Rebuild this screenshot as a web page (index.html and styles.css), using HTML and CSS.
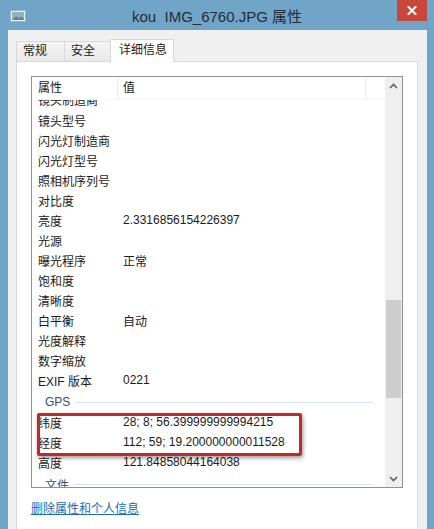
FILE: index.html
```html
<!DOCTYPE html>
<html lang="zh-CN">
<head>
<meta charset="utf-8">
<title>kou IMG_6760.JPG 属性</title>
<link rel="stylesheet" href="styles.css">
</head>
<body>
<div class="window">
  <div class="titlebar">
    <svg class="app-icon" width="16" height="12" viewBox="0 0 16 12">
      <rect x="0.5" y="0.5" width="15" height="11" fill="#e9f2f6" stroke="#9fb4bf"/>
      <rect x="2" y="2" width="12" height="8" fill="#8fb3c3"/>
      <path d="M2 10 L6 6 L9 8 L11 6.5 L14 9 L14 10 Z" fill="#5e8796"/>
    </svg>
    <div class="title">kou  IMG_6760.JPG 属性</div>
    <div class="close">
      <svg width="10" height="9" viewBox="0 0 10 9"><path d="M1.5 1 L8.5 8 M8.5 1 L1.5 8" stroke="#fff" stroke-width="2" stroke-linecap="square"/></svg>
    </div>
  </div>
  <div class="client">
    <div class="tabs">
      <div class="tab t1">常规</div>
      <div class="tab t2">安全</div>
      <div class="tab t3 active">详细信息</div>
    </div>
    <div class="panel">
      <div class="list">
        <div class="list-main">
          <div class="list-head">
            <div class="hc hk">属性</div>
            <div class="hc hv">值</div>
            <div class="hc hx"></div>
          </div>
          <div class="rows">
            <div class="row first"><span class="k">镜头制造商</span><span class="v"></span></div>
            <div class="row"><span class="k">镜头型号</span><span class="v"></span></div>
            <div class="row"><span class="k">闪光灯制造商</span><span class="v"></span></div>
            <div class="row"><span class="k">闪光灯型号</span><span class="v"></span></div>
            <div class="row"><span class="k">照相机序列号</span><span class="v"></span></div>
            <div class="row"><span class="k">对比度</span><span class="v"></span></div>
            <div class="row"><span class="k">亮度</span><span class="v">2.3316856154226397</span></div>
            <div class="row"><span class="k">光源</span><span class="v"></span></div>
            <div class="row"><span class="k">曝光程序</span><span class="v">正常</span></div>
            <div class="row"><span class="k">饱和度</span><span class="v"></span></div>
            <div class="row"><span class="k">清晰度</span><span class="v"></span></div>
            <div class="row"><span class="k">白平衡</span><span class="v">自动</span></div>
            <div class="row"><span class="k">光度解释</span><span class="v"></span></div>
            <div class="row"><span class="k">数字缩放</span><span class="v"></span></div>
            <div class="row"><span class="k">EXIF 版本</span><span class="v">0221</span></div>
            <div class="group"><span class="gt">GPS</span><span class="gl"></span></div>
            <div class="row"><span class="k">纬度</span><span class="v">28; 8; 56.399999999994215</span></div>
            <div class="row"><span class="k">经度</span><span class="v">112; 59; 19.200000000011528</span></div>
            <div class="row"><span class="k">高度</span><span class="v">121.84858044164038</span></div>
            <div class="group"><span class="gt">文件</span><span class="gl"></span></div>
          </div>
        </div>
        <div class="scrollbar">
          <div class="sb-arrow">
            <svg width="9" height="6" viewBox="0 0 9 6"><path d="M1 5 L4.5 1.5 L8 5" fill="none" stroke="#606060" stroke-width="1.6"/></svg>
          </div>
          <div class="sb-track">
            <div class="sb-space top"></div>
            <div class="sb-thumb"></div>
            <div class="sb-space"></div>
          </div>
          <div class="sb-arrow">
            <svg width="9" height="6" viewBox="0 0 9 6"><path d="M1 1 L4.5 4.5 L8 1" fill="none" stroke="#606060" stroke-width="1.6"/></svg>
          </div>
        </div>
      </div>
      <a class="remove-link" href="#">删除属性和个人信息</a>
    </div>
  </div>
  <div class="highlight"></div>
</div>
</body>
</html>
```
FILE: styles.css
```css
html, body {
  margin: 0;
  padding: 0;
}
body {
  width: 434px;
  height: 529px;
  overflow: hidden;
  font-family: "Liberation Sans", "Noto Sans CJK SC", sans-serif;
  font-size: 12px;
  color: #1a1a1a;
}
.window {
  position: relative;
  width: 434px;
  height: 529px;
  background: #70a5c8;
  display: flex;
  flex-direction: column;
  overflow: hidden;
}
.titlebar {
  height: 30px;
  flex: none;
  position: relative;
  display: flex;
  align-items: center;
  justify-content: center;
}
.app-icon {
  position: absolute;
  left: 10px;
  top: 10px;
}
.title {
  white-space: pre;
  font-family: "Liberation Sans", "Noto Sans CJK SC", sans-serif;
  font-size: 15px;
  color: #1f2d38;
  padding-top: 1px;
}
.close {
  position: absolute;
  right: 7px;
  top: 0;
  width: 30px;
  height: 21px;
  background: #c8473d;
  display: flex;
  align-items: center;
  justify-content: center;
}
.client {
  flex: 1;
  margin: 0 7px 0 8px;
  background: #f0f0f0;
  padding: 9px 9px 0 8px;
  display: flex;
  flex-direction: column;
  min-height: 0;
}
.tabs {
  display: flex;
  align-items: flex-end;
  height: 22px;
  flex: none;
  position: relative;
  z-index: 1;
}
.tab {
  box-sizing: border-box;
  height: 20px;
  border: 1px solid #d9d9d9;
  border-bottom: none;
  background: linear-gradient(#f4f4f4, #e9e9e9);
  line-height: 19px;
  padding-left: 6px;
  color: #1a1a1a;
}
.t1 { width: 49px; }
.t2 { width: 47px; margin-left: -1px; padding-left: 6px; }
.t3 {
  width: 64px;
  margin-left: -1px;
  height: 23px;
  margin-bottom: -1px;
  background: #fff;
  padding-left: 8px;
  line-height: 20px;
}
.panel {
  flex: 1;
  background: #fff;
  border: 1px solid #d9d9d9;
  border-bottom: none;
  padding: 14px 0 0 14px;
  display: flex;
  flex-direction: column;
  align-items: flex-start;
}
.list {
  width: 372px;
  height: 412px;
  box-sizing: border-box;
  border: 1px solid #8f9096;
  display: flex;
  flex: none;
}
.list-main {
  flex: 1;
  display: flex;
  flex-direction: column;
  min-width: 0;
}
.list-head {
  height: 23px;
  flex: none;
  display: flex;
  background: #fff;
  border-bottom: 1px solid #f2f4f6;
  box-sizing: border-box;
  position: relative;
  z-index: 1;
}
.hc {
  box-sizing: border-box;
  line-height: 23px;
  border-right: 1px solid #e8ebee;
}
.hk { width: 86px; padding-left: 6px; }
.hv { width: 248px; padding-left: 5px; }
.hx { flex: 1; border-right: none; }
.rows {
  flex: 1;
  overflow: hidden;
}
.row {
  height: 20px;
  display: flex;
  align-items: center;
  white-space: nowrap;
  margin-top: -1px;
  margin-bottom: 1px;
}
.row.first {
  margin-top: -12px;
  height: 23px;
  margin-bottom: 0;
}
.k {
  width: 86px;
  padding-left: 6px;
  box-sizing: border-box;
  flex: none;
}
.v {
  padding-left: 5px;
}
.group {
  height: 22px;
  display: flex;
  align-items: center;
  padding-left: 13px;
  padding-right: 12px;
}
.gt {
  color: #3b4a74;
}
.gl {
  flex: 1;
  height: 1px;
  background: #dde3ea;
  margin-left: 5px;
}
.scrollbar {
  width: 17px;
  flex: none;
  background: #efefef;
  display: flex;
  flex-direction: column;
}
.sb-arrow {
  height: 17px;
  flex: none;
  display: flex;
  align-items: center;
  justify-content: center;
}
.sb-track {
  flex: 1;
  display: flex;
  flex-direction: column;
}
.sb-space.top { height: 206px; flex: none; }
.sb-space { flex: 1; }
.sb-thumb {
  height: 98px;
  margin: 0 1px;
  background: #cdcdcd;
  flex: none;
}
.remove-link {
  margin-top: 13px;
  margin-left: 0;
  color: #1a6bb8;
  text-decoration: underline;
  line-height: 16px;
}
.highlight {
  position: absolute;
  left: 37px;
  top: 413px;
  width: 265px;
  height: 43px;
  box-sizing: border-box;
  border: 3px solid #c3282b;
  border-radius: 2px;
  box-shadow: 1px 2px 4px rgba(0, 0, 0, 0.4);
}
```
